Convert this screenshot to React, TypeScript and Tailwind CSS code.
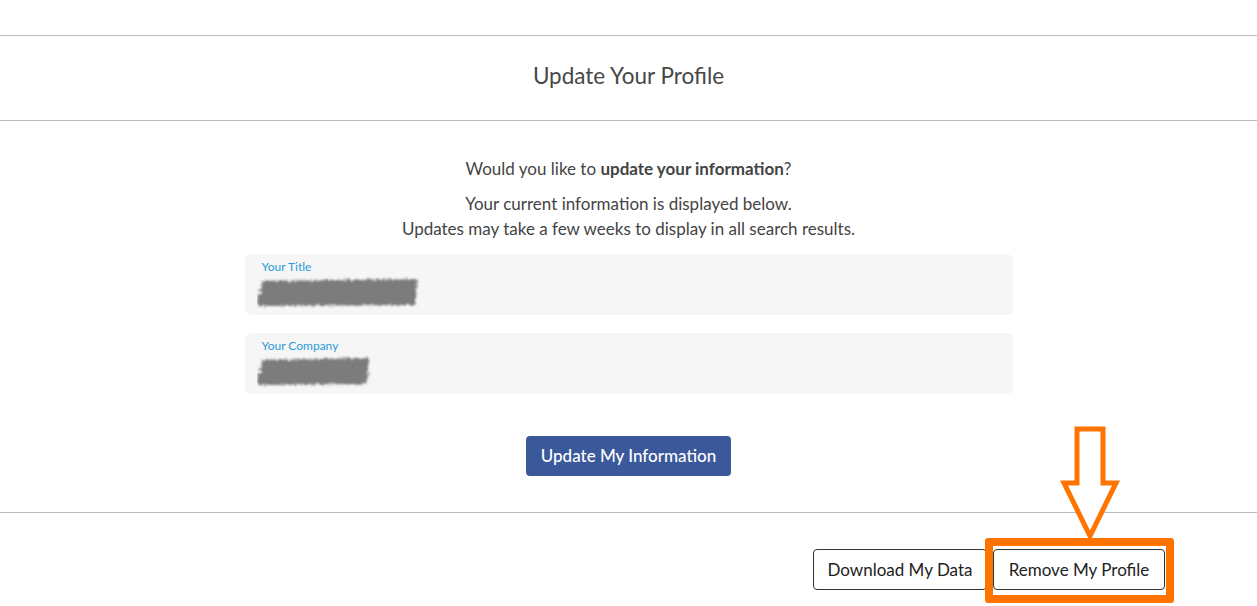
import React from "react";

function Scribble({ width }: { width: number }) {
  return (
    <svg width={width} height="34" viewBox={`0 0 ${width} 34`} className="block">
      <defs>
        <filter id={`rough${width}`} x="-10%" y="-30%" width="120%" height="160%">
          <feTurbulence type="fractalNoise" baseFrequency="0.35" numOctaves="2" result="n" />
          <feDisplacementMap in="SourceGraphic" in2="n" scale="6" />
          <feGaussianBlur stdDeviation="0.8" />
        </filter>
      </defs>
      <path
        d={`M6 6 L${width - 4} 4 L${width - 6} 30 L2 31 L0 26 Z`}
        fill="#7b7b7b"
        filter={`url(#rough${width})`}
      />
    </svg>
  );
}

function Field({ label, scribble }: { label: string; scribble: number }) {
  return (
    <div className="bg-[#f6f6f6] rounded-md h-[61px] w-[768px] pl-[17px] pt-[6px]">
      <div className="text-[12px] leading-[14px] text-[#2b9ad9]">{label}</div>
      <div className="-ml-[5px] mt-[1px]">
        <Scribble width={scribble} />
      </div>
    </div>
  );
}

export default function App() {
  return (
    <div
      className="relative w-[1257px] h-[606px] bg-white overflow-hidden text-[#444]"
      style={{ fontFamily: "Lato, 'Open Sans', sans-serif" }}
    >
      <div className="h-[36px] border-b border-[#bdbdbd]" />
      <div className="h-[85px] border-b border-[#bdbdbd] flex items-center justify-center">
        <h1 className="text-[22.5px] text-[#474747] -mt-[4px]">Update Your Profile</h1>
      </div>

      <div className="flex flex-col items-center pt-[35px] border-b border-[#bdbdbd] h-[392px]">
        <p className="text-[17px] leading-[25px]">
          Would you like to <span className="font-bold">update your information</span>?
        </p>
        <p className="text-[17px] leading-[25px] text-center mt-[10px]">
          Your current information is displayed below.
          <br />
          Updates may take a few weeks to display in all search results.
        </p>
        <div className="flex flex-col gap-[18px] mt-[13px]">
          <Field label="Your Title" scribble={164} />
          <Field label="Your Company" scribble={116} />
        </div>
        <button className="mt-[42px] h-[40px] w-[205px] bg-[#3b589a] rounded text-white text-[17px] font-medium">
          Update My Information
        </button>
      </div>

      <div className="flex justify-end gap-[6px] pr-[92px] pt-[36px]">
        <button className="h-[41px] w-[174px] border border-[#333] rounded text-[17px] text-[#222]">
          Download My Data
        </button>
        <button className="h-[41px] w-[172px] border border-[#333] rounded text-[17px] text-[#222]">
          Remove My Profile
        </button>
      </div>

      {/* annotation overlay */}
      <div className="absolute left-[985px] top-[538px] w-[189px] h-[65px] border-[8px] border-[#ff7300] rounded-[3px]" />
      <svg className="absolute left-[1058px] top-[424px]" width="64" height="118" viewBox="0 0 64 118">
        <path
          d="M19 5 L45 5 L45 59 L58 59 L32 112 L6 59 L19 59 Z"
          fill="white"
          stroke="#ff7300"
          strokeWidth="5"
          strokeLinejoin="miter"
        />
      </svg>
    </div>
  );
}
